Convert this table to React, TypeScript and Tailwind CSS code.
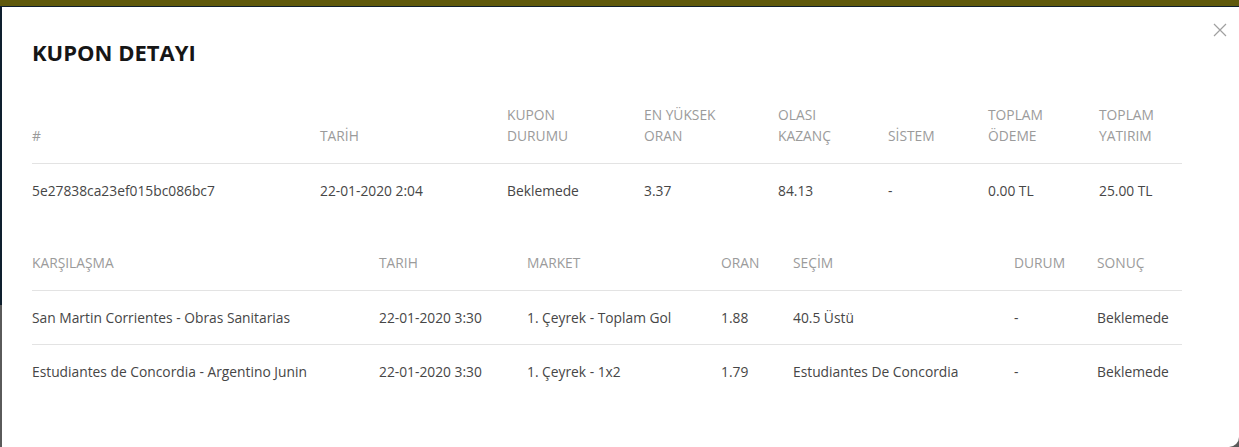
const couponHead = [
  ['#'],
  ['TARİH'],
  ['KUPON', 'DURUMU'],
  ['EN YÜKSEK', 'ORAN'],
  ['OLASI', 'KAZANÇ'],
  ['SİSTEM'],
  ['TOPLAM', 'ÖDEME'],
  ['TOPLAM', 'YATIRIM'],
];

const couponRow = ['5e27838ca23ef015bc086bc7', '22-01-2020 2:04', 'Beklemede', '3.37', '84.13', '-', '0.00 TL', '25.00 TL'];

const matchHead = ['KARŞILAŞMA', 'TARIH', 'MARKET', 'ORAN', 'SEÇİM', 'DURUM', 'SONUÇ'];

const matches = [
  ['San Martin Corrientes - Obras Sanitarias', '22-01-2020 3:30', '1. Çeyrek - Toplam Gol', '1.88', '40.5 Üstü', '-', 'Beklemede'],
  ['Estudiantes de Concordia - Argentino Junin', '22-01-2020 3:30', '1. Çeyrek - 1x2', '1.79', 'Estudiantes De Concordia', '-', 'Beklemede'],
];

export default function App() {
  return (
    <div className="flex h-[447px] w-full flex-col overflow-hidden bg-[#5a5a5a] font-['Open_Sans',sans-serif]">
      <div className="h-[6px] shrink-0 bg-[#5f590c]" />
      <div className="h-px shrink-0 bg-[#0e1f2e]" />

      <div className="flex min-h-0 flex-1">
        {/* backdrop edge */}
        <div className="flex w-[2px] shrink-0 flex-col">
          <div className="h-[298px] bg-[#0e1f2e]" />
          <div className="flex-1 bg-[#5a5a5a]" />
        </div>

        {/* Modal */}
        <div className="relative flex-1 rounded-br-[10px] bg-white pl-[30px] pt-[31px]">
          <button className="absolute right-[12px] top-[16px] text-[#a0a0a0]" aria-label="Kapat">
            <svg width="14" height="14" viewBox="0 0 14 14" fill="none" stroke="currentColor" strokeWidth="1.2">
              <path d="M1 1L13 13M13 1L1 13" />
            </svg>
          </button>

          <h2 className="text-[22px] font-bold leading-[28px] text-[#161616]">KUPON DETAYI</h2>

          <div className="mt-[23px] w-[1150px] text-[13.8px] leading-[21px]">
            <div className="grid grid-cols-[288px_187px_137px_134px_110px_100px_111px_83px] border-b border-[#e3e3e3] text-[#9b9b9b]">
              {couponHead.map((lines, i) => (
                <div key={i} className="flex flex-col justify-end pb-[17px] pt-[15px]">
                  {lines.map((l) => (
                    <span key={l}>{l}</span>
                  ))}
                </div>
              ))}
            </div>
            <div className="grid grid-cols-[288px_187px_137px_134px_110px_100px_111px_83px] text-[#464646]">
              {couponRow.map((c, i) => (
                <div key={i} className="py-[16px]">{c}</div>
              ))}
            </div>
          </div>

          <div className="mt-[19px] w-[1150px] text-[13.8px] leading-[21px]">
            <div className="grid grid-cols-[347px_148px_194px_72px_221px_83px_85px] border-b border-[#e3e3e3] text-[#9b9b9b]">
              {matchHead.map((h) => (
                <div key={h} className="pb-[17px] pt-[16px]">{h}</div>
              ))}
            </div>
            {matches.map((row, r) => (
              <div
                key={r}
                className={`grid grid-cols-[347px_148px_194px_72px_221px_83px_85px] text-[#464646] ${r === 0 ? 'border-b border-[#e3e3e3]' : ''}`}
              >
                {row.map((c, i) => (
                  <div key={i} className={i === 0 || r === 1 ? 'pb-[16px] pt-[16px]' : 'py-[16px]'}>{c}</div>
                ))}
              </div>
            ))}
          </div>
        </div>
      </div>
    </div>
  );
}
